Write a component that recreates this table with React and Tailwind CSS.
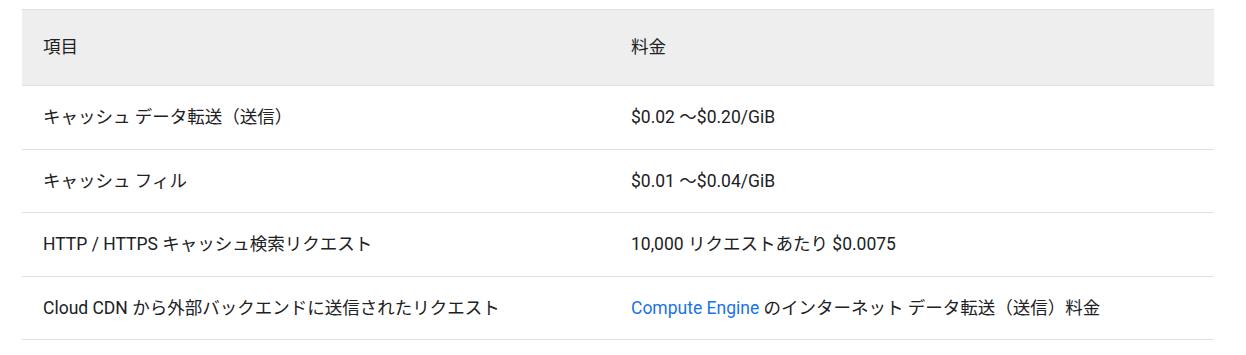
import React from "react";

const rows = [
  { h: "h-[64px]", a: "キャッシュ データ転送（送信）", b: "$0.02 ～$0.20/GiB" },
  { h: "h-[63px]", a: "キャッシュ フィル", b: "$0.01 ～$0.04/GiB" },
  { h: "h-[64px]", a: "HTTP / HTTPS キャッシュ検索リクエスト", b: "10,000 リクエストあたり $0.0075" },
  {
    h: "h-[63px]",
    a: "Cloud CDN から外部バックエンドに送信されたリクエスト",
    b: (
      <>
        <a className="text-[#1a73e8]">Compute Engine</a> のインターネット データ転送（送信）料金
      </>
    ),
  },
];

export default function App() {
  return (
    <div
      className="w-[1246px] h-[355px] bg-white pt-[9px] px-[22px] text-[17.5px] text-[#202124]"
      style={{ fontFamily: 'Roboto, "Noto Sans CJK JP", sans-serif' }}
    >
      <div className="w-[1192px] border-t border-[#e0e0e0]">
        <div className="flex h-[76px] items-center bg-[#eeeeee] border-b border-[#e0e0e0]">
          <div className="w-[588px] pl-[21px]">項目</div>
          <div className="flex-1 pl-[21px]">料金</div>
        </div>
        {rows.map((r, i) => (
          <div key={i} className={`flex ${r.h} items-center border-b border-[#e0e0e0]`}>
            <div className="w-[588px] pl-[21px]">{r.a}</div>
            <div className="flex-1 pl-[21px]">{r.b}</div>
          </div>
        ))}
      </div>
    </div>
  );
}
